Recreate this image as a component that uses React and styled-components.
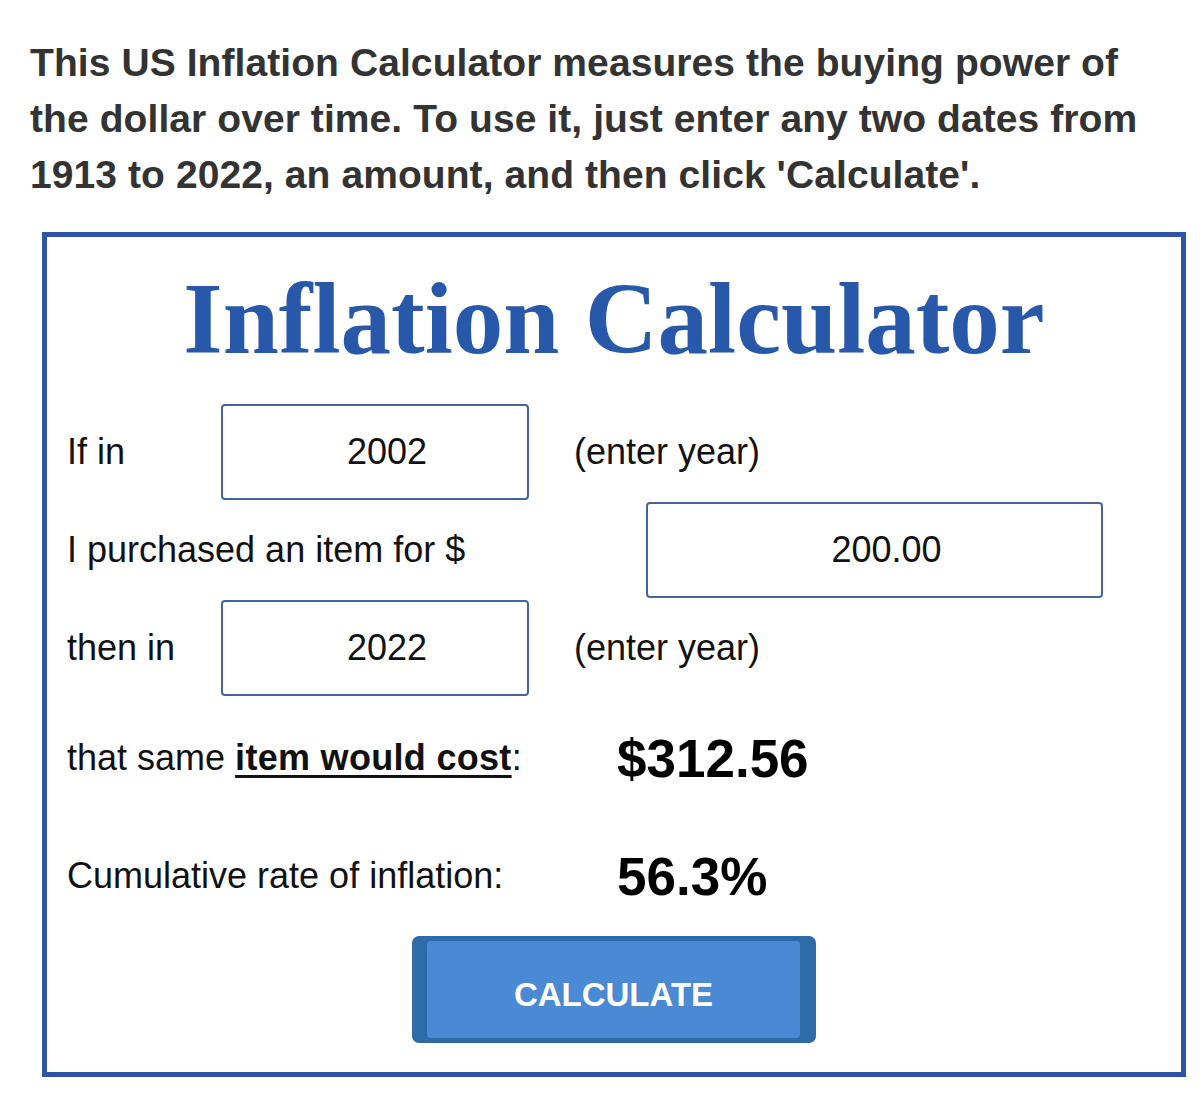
import React from "react";
import styled, { createGlobalStyle } from "styled-components";

const GlobalStyle = createGlobalStyle`
  html, body {
    margin: 0;
    padding: 0;
    background: #ffffff;
  }
  body {
    font-family: "Liberation Sans", Arial, sans-serif;
  }
`;

const Page = styled.div`
  width: 1200px;
  padding-top: 35px;
  padding-bottom: 24px;
`;

const Intro = styled.p`
  margin: 0 0 0 30px;
  width: 1140px;
  font-family: "Liberation Sans", Arial, sans-serif;
  font-weight: 700;
  font-size: 39px;
  letter-spacing: 0.08px;
  line-height: 56px;
  color: #333333;
`;

const Card = styled.section`
  box-sizing: border-box;
  margin: 29px 0 0 42px;
  width: 1144px;
  border: 5px solid #2c56a0;
  padding: 32px 0 29px 20px;
  display: flex;
  flex-direction: column;
`;

const Title = styled.h1`
  margin: 0 0 35px -20px;
  font-family: "Liberation Serif", "Times New Roman", serif;
  font-weight: 700;
  font-size: 101px;
  line-height: 100px;
  color: #2758a9;
  text-align: center;
`;

const Fields = styled.div`
  display: flex;
  flex-direction: column;
  gap: 2px;
`;

const Row = styled.div`
  display: flex;
  align-items: center;
  height: ${(p) => p.$h}px;
  box-sizing: border-box;
  margin-top: ${(p) => p.$mt || 0}px;
`;

const Label = styled.span`
  flex: 0 0 ${(p) => p.$w}px;
  font-size: 36px;
  color: #111111;
  white-space: nowrap;
`;

const Strong = styled.strong`
  font-weight: 700;
  letter-spacing: 0.3px;
  text-decoration: underline;
  text-decoration-thickness: 3px;
  text-underline-offset: 5px;
`;

const Field = styled.input`
  box-sizing: border-box;
  width: ${(p) => p.$w}px;
  height: 96px;
  border: 2px solid #41659c;
  border-radius: 4px;
  padding: 0 0 0 24px;
  margin: 0;
  text-align: center;
  font-family: "Liberation Sans", Arial, sans-serif;
  font-size: 36px;
  color: #111111;
  background: #ffffff;
  outline: none;
`;

const Hint = styled.span`
  margin-left: 45px;
  font-size: 36px;
  color: #111111;
`;

const Result = styled.span`
  font-size: 53px;
  font-weight: 700;
  color: #000000;
`;

const Button = styled.button`
  align-self: center;
  margin-left: -20px;
  box-sizing: border-box;
  width: 404px;
  height: 107px;
  border: none;
  border-radius: 7px;
  background: #2f6aa9;
  padding: 5px 16px 5px 15px;
  display: flex;
  cursor: pointer;
`;

const ButtonFace = styled.span`
  flex: 1;
  display: flex;
  align-items: center;
  justify-content: center;
  padding-top: 9px;
  border-radius: 4px;
  background: #4a89d4;
  font-family: "Liberation Sans", Arial, sans-serif;
  font-weight: 700;
  font-size: 33px;
  line-height: 33px;
  color: #ffffff;
`;

export default function App() {
  return (
    <Page>
      <GlobalStyle />
      <Intro>
        This US Inflation Calculator measures the buying power of the dollar
        over time. To use it, just enter any two dates from 1913 to 2022, an
        amount, and then click 'Calculate'.
      </Intro>
      <Card>
        <Title>Inflation Calculator</Title>
        <Fields>
          <Row $h={96}>
            <Label $w={154}>If in</Label>
            <Field $w={308} defaultValue="2002" />
            <Hint>(enter year)</Hint>
          </Row>
          <Row $h={96}>
            <Label $w={579}>I purchased an item for $</Label>
            <Field $w={457} defaultValue="200.00" />
          </Row>
          <Row $h={96}>
            <Label $w={154}>then in</Label>
            <Field $w={308} defaultValue="2022" />
            <Hint>(enter year)</Hint>
          </Row>
        </Fields>
        <Row $h={116} $mt={4}>
          <Label $w={550}>
            that same <Strong>item would cost</Strong>:
          </Label>
          <Result>$312.56</Result>
        </Row>
        <Row $h={120}>
          <Label $w={550}>Cumulative rate of inflation:</Label>
          <Result>56.3%</Result>
        </Row>
        <Button type="button">
          <ButtonFace>CALCULATE</ButtonFace>
        </Button>
      </Card>
    </Page>
  );
}
